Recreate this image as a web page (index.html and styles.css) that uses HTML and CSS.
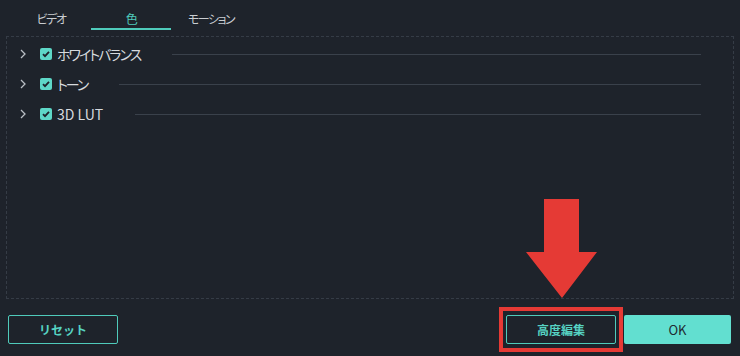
FILE: index.html
```html
<!DOCTYPE html>
<html lang="ja">
<head>
  <meta charset="UTF-8">
  <meta name="viewport" content="width=device-width, initial-scale=1.0">
  <title>色</title>
  <link rel="stylesheet" href="styles.css">
</head>
<body>
  <div class="tabs">
    <div class="tab">ビデオ</div>
    <div class="tab active">色</div>
    <div class="tab">モーション</div>
  </div>

  <div class="panel">
    <div class="row">
      <span class="chev"><svg width="7" height="10" viewBox="0 0 7 10"><path d="M1 1l4 4-4 4" fill="none" stroke="#b9bec4" stroke-width="1.3"/></svg></span>
      <span class="check"><svg width="10" height="10" viewBox="0 0 10 10"><path d="M2 5.2l2 2 4-4.4" fill="none" stroke="#1e232b" stroke-width="1.8"/></svg></span>
      <span class="label kana">ホワイトバランス</span>
      <span class="rule"></span>
    </div>
    <div class="row">
      <span class="chev"><svg width="7" height="10" viewBox="0 0 7 10"><path d="M1 1l4 4-4 4" fill="none" stroke="#b9bec4" stroke-width="1.3"/></svg></span>
      <span class="check"><svg width="10" height="10" viewBox="0 0 10 10"><path d="M2 5.2l2 2 4-4.4" fill="none" stroke="#1e232b" stroke-width="1.8"/></svg></span>
      <span class="label kana">トーン</span>
      <span class="rule"></span>
    </div>
    <div class="row">
      <span class="chev"><svg width="7" height="10" viewBox="0 0 7 10"><path d="M1 1l4 4-4 4" fill="none" stroke="#b9bec4" stroke-width="1.3"/></svg></span>
      <span class="check"><svg width="10" height="10" viewBox="0 0 10 10"><path d="M2 5.2l2 2 4-4.4" fill="none" stroke="#1e232b" stroke-width="1.8"/></svg></span>
      <span class="label">3D LUT</span>
      <span class="rule"></span>
    </div>
  </div>

  <div class="footer">
    <button class="btn outline">リセット</button>
    <div class="right">
      <button class="btn outline marked">高度編集</button>
      <button class="btn primary">OK</button>
    </div>
  </div>

  <svg class="arrow" width="71" height="100" viewBox="0 0 71 100">
    <path d="M18 0h35v53h18L36 99 0 53h18z" fill="#e53a35"/>
  </svg>
</body>
</html>
```

FILE: styles.css
```css
body {
  background: #1e232b;
  color: #d3d7db;
  font-family: "Noto Sans CJK JP", "Noto Sans", sans-serif;
  font-feature-settings: "palt";
  margin: 0;
  width: 740px;
  height: 356px;
  position: relative;
  overflow: hidden;
}
.tabs {
  display: flex;
  padding-left: 11px;
  height: 30px;
}
.tab {
  width: 80px;
  text-align: center;
  font-size: 12px;
  line-height: 16px;
  letter-spacing: -1.5px;
  padding-top: 11px;
  color: #c9cdd1;
  border-bottom: 2px solid transparent;
  box-sizing: border-box;
  height: 30px;
}
.tab.active {
  color: #4fcbbb;
  border-bottom-color: #4fcbbb;
}
.panel {
  margin: 6px 6px 0 6px;
  height: 263px;
  border: 1px dashed #353c46;
  padding-top: 2px;
  box-sizing: border-box;
}
.row {
  display: flex;
  align-items: center;
  height: 30px;
  padding-left: 13px;
  padding-right: 32px;
}
.chev {
  width: 20px;
  display: flex;
}
.check {
  width: 12px;
  height: 12px;
  background: #5ed8c8;
  border-radius: 2px;
  display: flex;
  align-items: center;
  justify-content: center;
  margin-right: 5px;
}
.label {
  font-size: 14px;
  color: #d6dade;
}
.kana {
  letter-spacing: -2px;
}
.rule {
  flex: 1;
  height: 1px;
  background: #3a414b;
  margin-left: 32px;
}
.footer {
  display: flex;
  justify-content: space-between;
  padding: 16px 9px 0 8px;
}
.right {
  display: flex;
  gap: 8px;
}
.btn {
  font-family: "Noto Sans CJK JP", "Noto Sans", sans-serif;
  height: 29px;
  border-radius: 2px;
  font-size: 12px;
  cursor: pointer;
  box-sizing: border-box;
}
.outline {
  width: 110px;
  background: transparent;
  border: 1px solid #4fcbbb;
  color: #56d2c2;
  font-weight: bold;
}
.primary {
  width: 107px;
  background: #62dfd0;
  border: none;
  color: #1f2a31;
  font-size: 13px;
}
.marked {
  position: relative;
}
.marked::after {
  content: "";
  position: absolute;
  left: -8px;
  right: -8px;
  top: -9px;
  bottom: -9px;
  border: 4px solid #e53a35;
}
.arrow {
  position: absolute;
  left: 526px;
  top: 199px;
}
```
